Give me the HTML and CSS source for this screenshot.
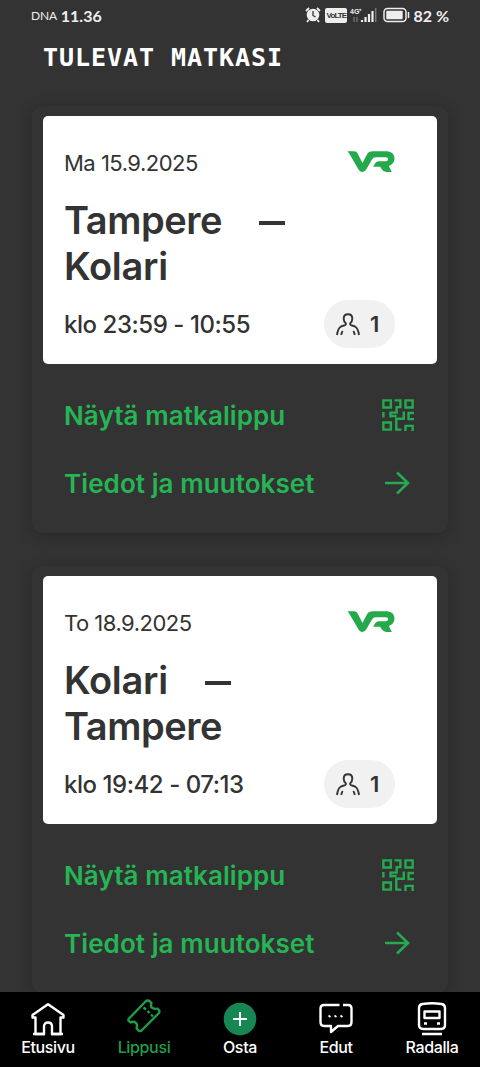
FILE: index.html
```html
<!DOCTYPE html>
<html lang="fi">
<head>
<meta charset="utf-8">
<meta name="viewport" content="width=device-width, initial-scale=1">
<title>Tulevat matkasi</title>
<link rel="stylesheet" href="styles.css">
</head>
<body>
<svg class="defs" width="0" height="0" aria-hidden="true">
  <symbol id="vr" viewBox="0 0 141 63">
    <path d="M0 1H20Q27 1 30 7L45 36L59 9Q64 1 76 1H119Q141 3 141 24Q140 39 124 45L133 63H116Q107 63 103 55L98 47H77L83 37Q87 31 94 31H116Q122 30 122 25Q122 19 115 19H85Q77 19 73 26L57 54Q52 63 45 63Q38 63 34 57L9 14Q6 8 0 1Z" fill="currentColor"/>
  </symbol>
  <symbol id="person" viewBox="0 0 24 23">
    <g fill="none" stroke="currentColor" stroke-width="1.9">
      <path d="M1 22Q2 15 5 13.500L9 12.200Q10.400 11.500 9.600 10Q7.700 8.500 7.700 5.500Q7.700 1.200 12 1.200T16.300 5.500Q16.300 8.500 14.400 10Q13.600 11.500 15 12.200L19 13.500Q22 15 23 22"/>
      <path d="M5.300 22Q5.500 19.500 6.700 18M18.700 22Q18.500 19.500 17.300 18"/>
    </g>
  </symbol>
  <symbol id="qr" viewBox="0 0 94 94">
    <g fill="none" stroke="currentColor" stroke-width="7">
      <path d="M4 4H26V25H4ZM69 4H90V25H69ZM4 69H26V90H4Z"/>
      <path d="M37 4H54V24H43V40H25V54M4 38V54M25 50H43M64 37V58H42V90H57M94 41H78V59H94M69 94V79H90V94"/>
    </g>
  </symbol>
  <symbol id="arrow" viewBox="0 0 26 24">
    <path d="M1 12H23M13 1.500L24 12L13 22.500" fill="none" stroke="currentColor" stroke-width="2.600"/>
  </symbol>
</svg>

<header class="status">
  <div class="status-left"><span class="carrier">DNA</span><span class="clock">11.36</span></div>
  <div class="status-right">
    <svg class="alarm" viewBox="0 0 16 16"><path d="M1 4L4 1M15 4L12 1M3.500 13L2 15M12.500 13L14 15" stroke="#eee" stroke-width="1.800"/><circle cx="8" cy="8" r="6.300" fill="#eee"/><path d="M8 4V8.500L10.500 10" fill="none" stroke="#333" stroke-width="1.300"/></svg>
    <span class="volte">VoLTE</span>
    <svg class="signal" viewBox="0 0 27 17"><text x="0" y="7" class="net">4G⁺</text><path d="M4 10V15M7 10V15" stroke="#777" stroke-width="1.300"/><path d="M12 13V15M15.500 10V15M19 7V15M22.500 4V15" stroke="#eee" stroke-width="2.200"/><path d="M25.700 1V15" stroke="#777" stroke-width="1.500"/></svg>
    <svg class="battery" viewBox="0 0 27 16"><rect x="1" y="1.500" width="22" height="13" rx="3.500" fill="none" stroke="#eee" stroke-width="1.500"/><rect x="3.200" y="3.700" width="16.500" height="8.600" rx="1" fill="#eee"/><path d="M25.500 5V11" stroke="#eee" stroke-width="1.500"/></svg>
    <span class="percent">82 %</span>
  </div>
</header>

<main class="trips">
  <h1>TULEVAT MATKASI</h1>

  <article class="card">
    <section class="ticket">
      <div class="row top"><span class="date">Ma 15.9.2025</span><svg class="vr"><use href="#vr"/></svg></div>
      <h2><span class="leg"><span class="tampere">Tampere</span><i class="dash"></i></span><span class="kolari">Kolari</span></h2>
      <div class="row"><span class="time">klo 23:59 - 10:55</span><span class="pill"><svg class="person"><use href="#person"/></svg>1</span></div>
    </section>
    <a class="action"><span class="show">Näytä matkalippu</span><svg class="qr"><use href="#qr"/></svg></a>
    <a class="action"><span class="details">Tiedot ja muutokset</span><svg class="arrow"><use href="#arrow"/></svg></a>
  </article>

  <article class="card">
    <section class="ticket">
      <div class="row top"><span class="date">To 18.9.2025</span><svg class="vr"><use href="#vr"/></svg></div>
      <h2><span class="leg"><span class="kolari">Kolari</span><i class="dash"></i></span><span class="tampere">Tampere</span></h2>
      <div class="row"><span class="time">klo 19:42 - 07:13</span><span class="pill"><svg class="person"><use href="#person"/></svg>1</span></div>
    </section>
    <a class="action"><span class="show">Näytä matkalippu</span><svg class="qr"><use href="#qr"/></svg></a>
    <a class="action"><span class="details">Tiedot ja muutokset</span><svg class="arrow"><use href="#arrow"/></svg></a>
  </article>
</main>

<nav class="tabs">
  <a class="tab"><svg viewBox="0 0 36 34"><path d="M2.500 15V12.500L18 1.800L33.500 12.500V15H30.500V31.500H22V24Q22 20 18 20T14 24V31.500H5.500V15Z" transform="translate(0 .5)"/><path d="M3 32H15M21 32H33"/></svg>Etusivu</a>
  <a class="tab active"><svg class="raised" viewBox="0 0 36 34"><path d="M3 19.500L19.500 2.500Q21.500 .5 24 2.500L25.500 4Q24 7.500 26.500 9Q29 10.500 31.500 9.500L33 11Q34 13 32.500 14.500L15.500 31.500Q13.500 33 12 31L10.500 29Q12 25.500 9.500 23.500Q7.500 22 4.500 23.500L2.500 21.500Q2 20.500 3 19.500Z"/><path d="M17.500 8.500L20 10.500M21.500 12L23.500 14M25 15.500L27 17.500"/></svg>Lippusi</a>
  <a class="tab"><svg viewBox="0 0 36 34"><circle class="disc" cx="18" cy="17" r="16.300"/><path d="M11 17H25M18 10V24" stroke-width="2"/></svg>Osta</a>
  <a class="tab"><svg viewBox="0 0 36 34"><path d="M21.500 3H6Q2.500 3 2.500 6.500V20Q2.500 24 6 24H13V30L20 24H30Q33.500 24 33.500 20V6.500Q33.500 3 30 3H25"/><path d="M11 15L12 13.500M17 15L18 13.500M23 15L24 13.500"/></svg>Edut</a>
  <a class="tab"><svg viewBox="0 0 36 34"><path d="M5 6Q5 2.500 8.500 2Q18 .5 27.500 2Q31 2.500 31 6V23Q31 27 27 27H9Q5 27 5 23ZM10.500 9.500H25.500V16H10.500ZM10 21.500H13M23 21.500H26M8 32H28"/></svg>Radalla</a>
</nav>
</body>
</html>
```
FILE: styles.css
```css
* { box-sizing: border-box; }
html, body { height: 100%; }
body {
  margin: 0;
  height: 1067px;
  display: flex;
  flex-direction: column;
  overflow: hidden;
  background: #333;
  color: #333;
  font-family: Inter, "Liberation Sans", sans-serif;
}
svg { display: block; }
.defs { position: absolute; }

.status {
  flex: none;
  height: 30px;
  padding: 0 31px;
  display: flex;
  justify-content: space-between;
  align-items: center;
  color: #eee;
  font-family: Lato, sans-serif;
}
.status-left, .status-right { display: flex; align-items: center; }
.status-left { gap: 4px; }
.carrier { font-size: 12px; letter-spacing: -.2px; }
.clock { font-size: 16px; font-weight: 700; }
.alarm { width: 16px; height: 16px; margin-right: 4px; }
.volte {
  width: 22px;
  height: 15px;
  margin-right: 3px;
  border-radius: 2px;
  background: #eee;
  color: #333;
  font: 700 8px/15px "Liberation Sans", sans-serif;
  letter-spacing: -.9px;
  text-align: center;
}
.signal { width: 27px; height: 17px; margin-right: 6px; }
.net { font: 700 7px "Liberation Sans", sans-serif; fill: #eee; }
.battery { width: 27px; height: 16px; margin-right: 3px; }
.percent { font-size: 16px; font-weight: 700; }

.trips {
  flex: 1;
  min-height: 0;
  overflow: hidden;
  padding: 13px 32px 0;
}
h1 {
  margin: 0 0 33px 11px;
  color: #fff;
  font: 700 25px/30px "DejaVu Sans Mono", monospace;
  letter-spacing: .95px;
  white-space: nowrap;
}
.card {
  height: 427px;
  margin-bottom: 33px;
  padding: 10px 11px;
  border-radius: 10px;
  background: #333;
  box-shadow: 0 3px 16px rgba(0, 0, 0, .23);
}
.ticket {
  height: 248px;
  margin-bottom: 17px;
  padding: 30px 42px 0 21px;
  border-radius: 5px;
  background: #fff;
}
.row { display: flex; justify-content: space-between; align-items: center; white-space: nowrap; }
.top { height: 32px; align-items: flex-start; }
.date { font-size: 22px; line-height: 34px; letter-spacing: -.5px; }
.vr { width: 48px; height: 21px; margin-top: 5px; color: #25aa4b; }
h2 {
  height: 92px;
  margin: 19px 0 11px;
  display: flex;
  flex-direction: column;
  font-size: 38px;
  line-height: 46px;
  font-weight: 600;
}
.tampere { letter-spacing: -.45px; }
.kolari { letter-spacing: -.25px; }
.leg { display: flex; align-items: center; gap: 37px; }
.dash { width: 26px; height: 4px; margin-top: 5px; background: #333; }
.time { font-size: 24px; font-weight: 500; letter-spacing: -.45px; }
.pill {
  width: 71px;
  height: 48px;
  padding-left: 12px;
  display: flex;
  align-items: center;
  gap: 10px;
  border-radius: 24px;
  background: #f1f1f1;
  font-size: 22px;
  font-weight: 600;
}
.person { width: 24px; height: 23px; }
.action {
  height: 68px;
  padding: 0 23px 0 21px;
  display: flex;
  justify-content: space-between;
  align-items: center;
  color: #25b555;
  font-size: 26px;
  font-weight: 600;
  letter-spacing: .08px;
  white-space: nowrap;
}
.action svg { color: #25aa50; }
.qr { width: 32px; height: 32px; }
.arrow { width: 26px; height: 24px; margin-right: 4px; }

.tabs {
  flex: none;
  height: 75px;
  padding-top: 10px;
  display: grid;
  grid-template-columns: repeat(5, 1fr);
  background: #000;
}
.tab {
  display: flex;
  flex-direction: column;
  align-items: center;
  color: #fff;
  font-size: 16px;
  line-height: 22px;
  font-weight: 500;
  letter-spacing: -.35px;
}
.tab svg {
  width: 36px;
  height: 34px;
  fill: none;
  stroke: currentColor;
  stroke-width: 2.4;
  stroke-linejoin: round;
}
.tab .raised { margin: -3px 0 3px; }
.active { color: #1d9f48; }
.disc { fill: #168653; stroke: none; }
```
